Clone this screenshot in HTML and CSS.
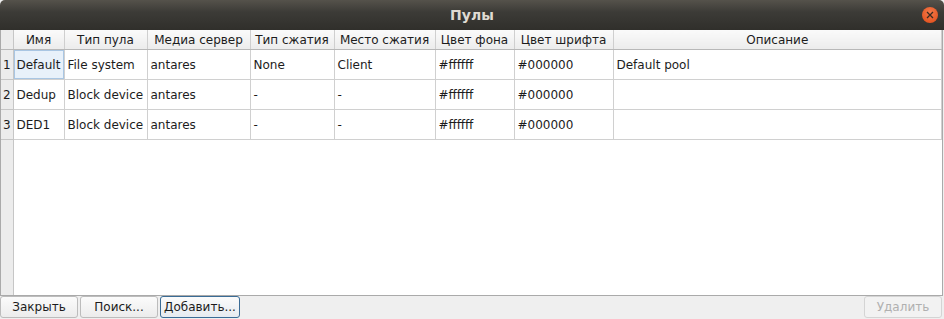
FILE: index.html
```html
<!DOCTYPE html>
<html lang="ru">
<head>
    <meta charset="UTF-8">
    <title>Пулы</title>
    <link rel="stylesheet" href="styles.css">
</head>
<body>
    <div class="window">
        <div class="titlebar">
            <span class="title">Пулы</span>
            <span class="close-btn">
                <svg width="8" height="8" viewBox="0 0 8 8"><path d="M1 1 L7 7 M7 1 L1 7" stroke="#3a2a20" stroke-width="1.3"/></svg>
            </span>
        </div>

        <div class="frame">
            <table class="grid">
                <colgroup>
                    <col class="c-num">
                    <col class="c-name">
                    <col class="c-type">
                    <col class="c-media">
                    <col class="c-ctype">
                    <col class="c-cplace">
                    <col class="c-bg">
                    <col class="c-fg">
                    <col>
                </colgroup>
                <thead>
                    <tr>
                        <th class="corner"></th>
                        <th>Имя</th>
                        <th>Тип пула</th>
                        <th>Медиа сервер</th>
                        <th>Тип сжатия</th>
                        <th>Место сжатия</th>
                        <th>Цвет фона</th>
                        <th>Цвет шрифта</th>
                        <th>Описание</th>
                    </tr>
                </thead>
                <tbody>
                    <tr>
                        <td class="num">1</td>
                        <td class="current">Default</td>
                        <td>File system</td>
                        <td>antares</td>
                        <td>None</td>
                        <td>Client</td>
                        <td>#ffffff</td>
                        <td>#000000</td>
                        <td>Default pool</td>
                    </tr>
                    <tr>
                        <td class="num">2</td>
                        <td>Dedup</td>
                        <td>Block device</td>
                        <td>antares</td>
                        <td>-</td>
                        <td>-</td>
                        <td>#ffffff</td>
                        <td>#000000</td>
                        <td></td>
                    </tr>
                    <tr>
                        <td class="num">3</td>
                        <td>DED1</td>
                        <td>Block device</td>
                        <td>antares</td>
                        <td>-</td>
                        <td>-</td>
                        <td>#ffffff</td>
                        <td>#000000</td>
                        <td></td>
                    </tr>
                </tbody>
            </table>
        </div>

        <div class="buttons">
            <button class="btn">Закрыть</button>
            <button class="btn">Поиск...</button>
            <button class="btn focused">Добавить...</button>
            <span class="spacer"></span>
            <button class="btn" disabled>Удалить</button>
        </div>
    </div>
</body>
</html>
```

FILE: styles.css
```css
body {
    margin: 0;
    background-color: #efefef;
    font-family: "DejaVu Sans", "Noto Sans", sans-serif;
    font-size: 12px;
    color: #1c1c1c;
}

.window {
    display: flex;
    flex-direction: column;
    width: 944px;
    height: 319px;
}

.titlebar {
    height: 30px;
    display: flex;
    align-items: center;
    justify-content: center;
    position: relative;
    background: linear-gradient(to bottom, #55524b, #3c3b37 40%, #302f2b);
    border-radius: 5px 5px 0 0;
}

.title {
    color: #dfdbd2;
    font-weight: bold;
    font-size: 14px;
}

.close-btn {
    position: absolute;
    right: 6px;
    top: 7px;
    width: 16px;
    height: 16px;
    border-radius: 50%;
    background: radial-gradient(circle at 50% 35%, #f47a4b, #df4a16);
    display: flex;
    align-items: center;
    justify-content: center;
}

.frame {
    flex: 1;
    width: 941px;
    border: 1px solid #aaaaaa;
    border-top: none;
    background: linear-gradient(to right, #ececec 0 12px, #c6c6c6 12px 13px, #ffffff 13px);
}

.grid {
    width: 100%;
    border-collapse: collapse;
    table-layout: fixed;
}

.c-num { width: 12px; }
.c-name { width: 51px; }
.c-type { width: 83px; }
.c-media { width: 103px; }
.c-ctype { width: 84px; }
.c-cplace { width: 101px; }
.c-bg { width: 79px; }
.c-fg { width: 99px; }

th {
    height: 19px;
    padding: 0;
    font-weight: normal;
    text-align: center;
    white-space: nowrap;
    overflow: hidden;
    background: linear-gradient(to bottom, #fafafa, #ececec);
    border-right: 1px solid #cfcfcf;
    border-bottom: 1px solid #b8b8b8;
}

th.corner {
    background: #ececec;
    border-right: 1px solid #c6c6c6;
}

td {
    height: 29px;
    padding: 0 0 0 3px;
    white-space: nowrap;
    overflow: hidden;
    background: #ffffff;
    border-right: 1px solid #d0d0d0;
    border-bottom: 1px solid #d0d0d0;
}

td.num {
    padding: 0;
    text-align: center;
    background: #ececec;
    border-right: 1px solid #c6c6c6;
    border-bottom: 1px solid #c6c6c6;
}

td.current {
    background: #e8f1fa;
    box-shadow: inset 0 0 0 1px #a9c6e3;
}

.buttons {
    display: flex;
    gap: 2px;
    height: 23px;
}

.spacer {
    flex: 1;
}

.btn {
    font-family: inherit;
    font-size: 12px;
    color: #1c1c1c;
    height: 22px;
    width: 78px;
    padding: 0;
    border: 1px solid #bcbcbc;
    border-radius: 3px;
    background: linear-gradient(to bottom, #fbfbfb, #ececec);
}

.btn.focused {
    width: 80px;
    border-color: #3a6c96;
    background: linear-gradient(to bottom, #fbfbfb, #e6ebf0);
}

.btn:disabled {
    color: #b0b0b0;
    border-color: #d4d4d4;
    background: #f2f2f2;
    margin-right: 2px;
}
```
